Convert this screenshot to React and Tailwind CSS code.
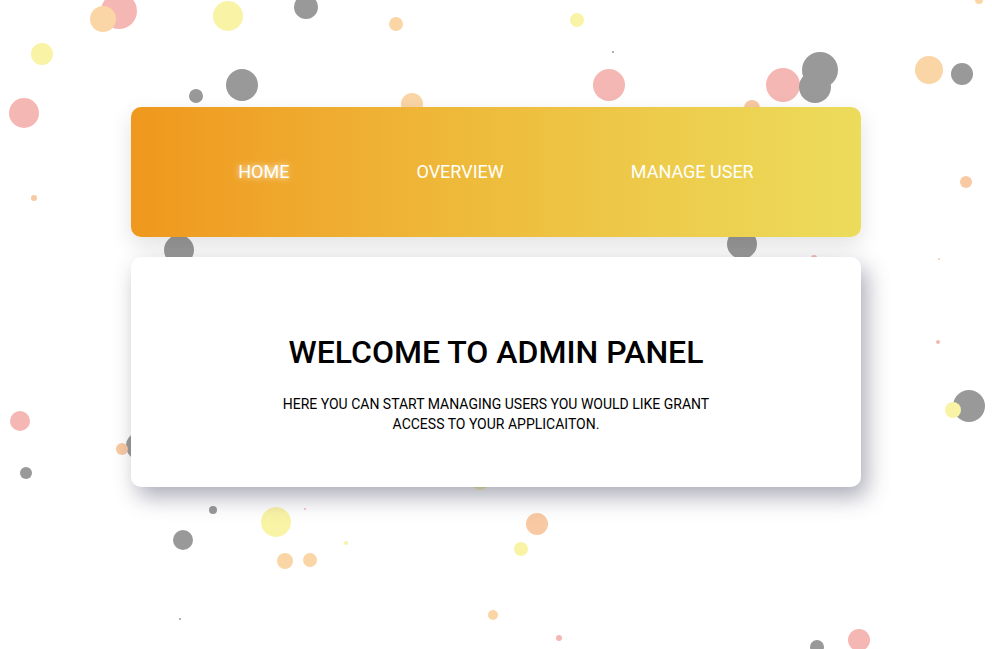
import React from 'react';

// confetti dots: [x, y, radius, tone]
const dots = [
  [119, 11, 18, 'pink'], [103, 19, 13, 'peach'], [228, 16, 15, 'yellow'], [306, 7, 12, 'gray'],
  [396, 24, 7, 'peach'], [42, 54, 11, 'yellow'], [24, 113, 15, 'pink'], [196, 96, 7, 'gray'],
  [242, 85, 16, 'gray'], [412, 104, 11, 'peach'], [577, 20, 7, 'yellow'], [613, 52, 1, 'gray'],
  [609, 85, 16, 'pink'], [783, 85, 17, 'pink'], [820, 70, 18, 'gray'], [815, 87, 16, 'gray'],
  [752, 108, 8, 'orange'], [929, 70, 14, 'peach'], [962, 74, 11, 'gray'], [979, 0, 4, 'peach'],
  [179, 250, 15, 'gray'], [742, 244, 15, 'gray'], [814, 258, 3, 'pink'], [966, 182, 6, 'orange'],
  [34, 198, 3, 'orange'], [939, 259, 1, 'orange'], [938, 342, 2, 'pink'], [969, 406, 16, 'gray'],
  [953, 410, 8, 'yellow'], [20, 421, 10, 'pink'], [140, 446, 14, 'gray'], [122, 449, 6, 'orange'],
  [26, 473, 6, 'gray'], [480, 480, 10, 'yellow'], [213, 510, 4, 'gray'], [276, 522, 15, 'yellow'],
  [305, 509, 1, 'pink'], [183, 540, 10, 'gray'], [285, 561, 8, 'peach'], [310, 560, 7, 'peach'],
  [346, 543, 2, 'yellow'], [180, 619, 1, 'gray'], [493, 615, 5, 'peach'], [537, 524, 11, 'orange'],
  [521, 549, 7, 'yellow'], [559, 638, 3, 'pink'], [817, 647, 7, 'gray'], [859, 640, 11, 'pink'],
];

const tones = {
  pink: 'bg-[#f5b7b3]',
  peach: 'bg-[#fad6a6]',
  orange: 'bg-[#f8c9a2]',
  yellow: 'bg-[#f9f3a5]',
  gray: 'bg-[#999999]',
};

const links = [
  { label: 'HOME', active: true },
  { label: 'OVERVIEW' },
  { label: 'MANAGE USER' },
];

export default function App() {
  return (
    <div className="relative min-h-screen overflow-hidden bg-white font-['Roboto',sans-serif]">
      {/* background confetti */}
      <div className="absolute inset-0">
        {dots.map(([x, y, r, tone], i) => (
          <span key={i}
            className={`absolute rounded-full ${tones[tone]}`}
            style={{ left: x - r, top: y - r, width: r * 2, height: r * 2 }} />
        ))}
      </div>

      <div className="relative mx-auto flex w-[730px] flex-col gap-5 pt-[107px]">
        {/* Nav */}
        <nav className="flex h-[130px] items-center justify-center gap-[127px] rounded-[10px] bg-gradient-to-r from-[#ef981d] via-[#eebd3d] to-[#ecdc5b] shadow-[0_8px_22px_rgba(0,0,0,0.12)]">
          {links.map(l => (
            <a key={l.label} href="#"
              className={`text-[18px] leading-none text-white ${l.active ? '[text-shadow:0_0_6px_rgba(255,255,255,0.95)]' : ''}`}>
              {l.label}
            </a>
          ))}
        </nav>

        {/* Welcome card */}
        <div className="flex h-[230px] flex-col items-center rounded-[10px] bg-white pt-[76px] text-center shadow-[6px_10px_22px_rgba(70,70,100,0.45)]">
          <h1 className="text-[32px] leading-[38px] font-medium text-black">WELCOME TO ADMIN PANEL</h1>
          <p className="mt-[23px] max-w-[440px] text-[14px] leading-[20px] text-black">
            HERE YOU CAN START MANAGING USERS YOU WOULD LIKE GRANT ACCESS TO YOUR APPLICAITON.
          </p>
        </div>
      </div>
    </div>
  );
}
